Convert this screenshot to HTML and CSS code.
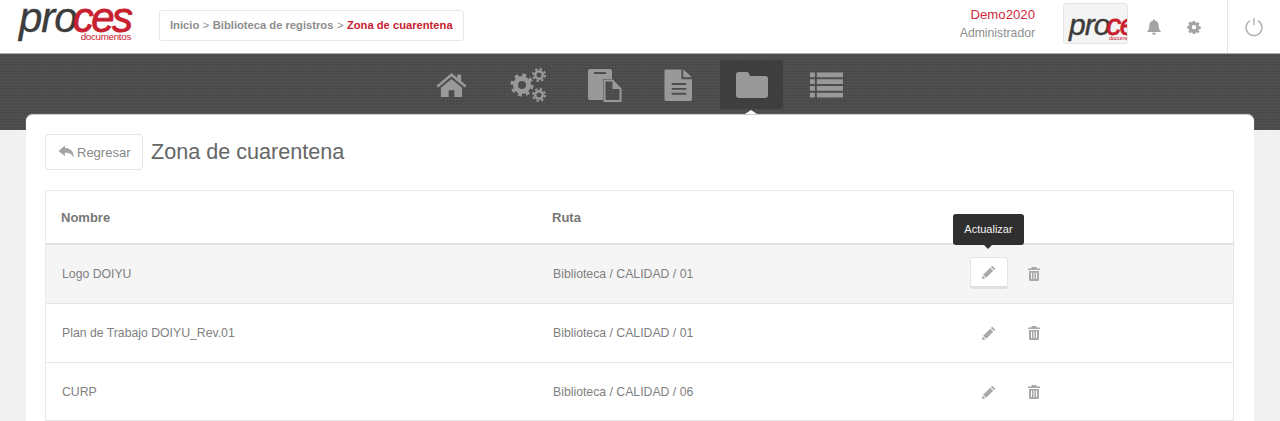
FILE: index.html
```html
<!DOCTYPE html>
<html lang="es">
<head>
    <meta charset="UTF-8">
    <meta name="viewport" content="width=device-width, initial-scale=1.0">
    <title>Zona de cuarentena</title>
    <link rel="stylesheet" href="styles.css">
</head>
<body>
    <header class="topbar">
        <a class="logo" href="#">
            <span class="logo-word"><span class="logo-dark">pro</span><span class="logo-red">ces</span></span>
            <span class="logo-sub">documentos</span>
        </a>
        <nav class="crumbs">
            <a href="#">Inicio</a>
            <span class="crumb-sep">&gt;</span>
            <a href="#">Biblioteca de registros</a>
            <span class="crumb-sep">&gt;</span>
            <span class="crumb-current">Zona de cuarentena</span>
        </nav>
        <div class="user">
            <div class="user-name">Demo2020</div>
            <div class="user-role">Administrador</div>
        </div>
        <div class="user-pic">
            <span class="logo-word"><span class="logo-dark">pro</span><span class="logo-red">ces</span></span>
            <span class="logo-sub">documentos</span>
        </div>
        <svg class="top-icon bell" viewBox="0 0 16 16"><path d="M8 0.500a1.200 1.200 0 0 0-1.200 1.300C4.600 2.300 3.400 4 3.400 6.200c0 3.200-.9 4.600-2.100 5.900v1h13.400v-1c-1.200-1.300-2.100-2.700-2.100-5.900 0-2.200-1.200-3.900-3.400-4.400A1.200 1.200 0 0 0 8 .5zM6.100 13.800a1.900 1.900 0 0 0 3.800 0z"/></svg>
        <svg class="top-icon gear" viewBox="0 0 16 16"><path fill-rule="evenodd" d="M6.700 1h2.600l.4 1.900 1.200.5 1.600-1.100 1.900 1.900-1.100 1.600.5 1.200 1.900.4v2.600l-1.900.4-.5 1.200 1.100 1.600-1.900 1.900-1.600-1.100-1.200.5-.4 1.900H6.700l-.4-1.900-1.200-.5-1.600 1.100-1.900-1.900 1.100-1.600-.5-1.200L.3 9.500V6.900l1.900-.4.500-1.200-1.100-1.600 1.900-1.900 1.600 1.100 1.200-.5zM8 5.700a2.500 2.500 0 1 0 0 5 2.500 2.500 0 0 0 0-5z"/></svg>
        <a class="power" href="#">
            <svg viewBox="0 0 20 20"><path d="M6 3.600a8 8 0 1 0 8 0M10 1v7" fill="none" stroke="#b5b5b5" stroke-width="1.500"/></svg>
        </a>
    </header>

    <nav class="mainnav">
        <a class="nav-item" href="#">
            <svg viewBox="0 0 32 26" width="31" height="25"><path d="M16 1 0.500 14l1.600 2L16 4.600l13.900 11.400 1.600-2L26 9.400V2.500h-4v3.500zM5 16.500V26h8v-7h6v7h8v-9.500L16 7.400z"/></svg>
        </a>
        <a class="nav-item nudge-1" href="#">
            <svg viewBox="0 0 36 34" width="36" height="34"><circle cx="12" cy="17" r="6.500" fill="none" stroke="#999" stroke-width="5"/><circle cx="12" cy="17" r="10" fill="none" stroke="#999" stroke-width="3" stroke-dasharray="3.900 3.950"/><circle cx="29" cy="7" r="3.750" fill="none" stroke="#999" stroke-width="2.500"/><circle cx="29" cy="7" r="6" fill="none" stroke="#999" stroke-width="2" stroke-dasharray="2.350 2.360"/><circle cx="29" cy="27" r="3.750" fill="none" stroke="#999" stroke-width="2.500"/><circle cx="29" cy="27" r="6" fill="none" stroke="#999" stroke-width="2" stroke-dasharray="2.350 2.360"/></svg>
        </a>
        <a class="nav-item nudge-3" href="#">
            <svg viewBox="0 0 34 34" width="34" height="34"><path d="M2 1h20a2 2 0 0 1 2 2v8h-9v21H2a2 2 0 0 1-2-2V3a2 2 0 0 1 2-2zm4 3v2h12V4z" fill-rule="evenodd"/><path d="M16.500 12.500h8l8 8.500v12h-16z" fill="none" stroke="#999" stroke-width="2"/><path d="M24.500 13v8h8z"/></svg>
        </a>
        <a class="nav-item nudge-2" href="#">
            <svg viewBox="0 0 30 34" width="29" height="34"><path fill-rule="evenodd" d="M2 1h16v10h11v21a1.500 1.500 0 0 1-1.500 1.500H2A1.500 1.500 0 0 1 .5 32V2.500A1.500 1.500 0 0 1 2 1zm6 14v2h15v-2zm0 5v2h15v-2zm0 5v2h15v-2z"/><path d="M20 1l9 8h-9z"/></svg>
        </a>
        <a class="nav-item active" href="#">
            <svg viewBox="0 0 32 28" width="32" height="28"><path d="M3 1h8a2 2 0 0 1 2 1.500L14 5h15a3 3 0 0 1 3 3v16a3 3 0 0 1-3 3H3a3 3 0 0 1-3-3V4a3 3 0 0 1 3-3z"/></svg>
        </a>
        <a class="nav-item" href="#">
            <svg viewBox="0 0 34 28" width="33" height="28"><path d="M0 1h5v5H0zM7 1h27v5H7zM0 8h5v5H0zM7 8h27v5H7zM0 15h5v5H0zM7 15h27v5H7zM0 22h5v5H0zM7 22h27v5H7z"/></svg>
        </a>
    </nav>

    <main class="card">
        <div class="card-head">
            <a class="back-btn" href="#">
                <svg viewBox="0 0 16 14" width="17" height="15"><path d="M6.500 0.500 0.500 5.500l6 5V7.300c4 0 6.500.8 8 4.700.8-4.500-1.500-9-8-9.300z"/></svg>
                Regresar
            </a>
            <h1>Zona de cuarentena</h1>
        </div>

        <div class="table-box">
            <div class="row row-head">
                <div class="col-name">Nombre</div>
                <div class="col-path">Ruta</div>
            </div>
            <div class="row row-hover">
                <div class="col-name">Logo DOIYU</div>
                <div class="col-path">Biblioteca / CALIDAD / 01</div>
                <div class="col-actions">
                    <a class="act act-on" href="#">
                        <span class="tip">Actualizar</span>
                        <svg viewBox="0 0 14 14" width="14" height="14"><path d="M10.300 0.700 13.300 3.700 11.900 5.100 8.900 2.100zM8.200 2.800 11.200 5.800 4.200 12.800 1.200 9.800zM.6 10.500 3.500 13.400 0 14z"/></svg>
                    </a>
                    <a class="act" href="#">
                        <svg viewBox="0 0 12 14" width="12" height="14"><path fill-rule="evenodd" d="M4 0h4l1 1.600h3v1.500H0V1.600h3zM1 4h10v8.500a1.500 1.500 0 0 1-1.500 1.500h-7A1.500 1.500 0 0 1 1 12.500zm2 1.500V12h1V5.500zm2.500 0V12h1V5.500zm2.500 0V12h1V5.500z"/></svg>
                    </a>
                </div>
            </div>
            <div class="row">
                <div class="col-name">Plan de Trabajo DOIYU_Rev.01</div>
                <div class="col-path">Biblioteca / CALIDAD / 01</div>
                <div class="col-actions">
                    <a class="act" href="#">
                        <svg viewBox="0 0 14 14" width="14" height="14"><path d="M10.300 0.700 13.300 3.700 11.900 5.100 8.900 2.100zM8.200 2.800 11.200 5.800 4.200 12.800 1.200 9.800zM.6 10.500 3.500 13.400 0 14z"/></svg>
                    </a>
                    <a class="act" href="#">
                        <svg viewBox="0 0 12 14" width="12" height="14"><path fill-rule="evenodd" d="M4 0h4l1 1.600h3v1.500H0V1.600h3zM1 4h10v8.500a1.500 1.500 0 0 1-1.500 1.500h-7A1.500 1.500 0 0 1 1 12.500zm2 1.500V12h1V5.500zm2.500 0V12h1V5.500zm2.500 0V12h1V5.500z"/></svg>
                    </a>
                </div>
            </div>
            <div class="row">
                <div class="col-name">CURP</div>
                <div class="col-path">Biblioteca / CALIDAD / 06</div>
                <div class="col-actions">
                    <a class="act" href="#">
                        <svg viewBox="0 0 14 14" width="14" height="14"><path d="M10.300 0.700 13.300 3.700 11.900 5.100 8.900 2.100zM8.200 2.800 11.200 5.800 4.200 12.800 1.200 9.800zM.6 10.500 3.500 13.400 0 14z"/></svg>
                    </a>
                    <a class="act" href="#">
                        <svg viewBox="0 0 12 14" width="12" height="14"><path fill-rule="evenodd" d="M4 0h4l1 1.600h3v1.500H0V1.600h3zM1 4h10v8.500a1.500 1.500 0 0 1-1.500 1.500h-7A1.500 1.500 0 0 1 1 12.500zm2 1.500V12h1V5.500zm2.500 0V12h1V5.500zm2.500 0V12h1V5.500z"/></svg>
                    </a>
                </div>
            </div>
        </div>
    </main>
</body>
</html>
```

FILE: styles.css
```css
* {
    box-sizing: border-box;
}

body {
    margin: 0;
    height: 421px;
    overflow: hidden;
    background: #f1f1f1;
    font-family: "Liberation Sans", Arial, sans-serif;
    color: #777;
}

a {
    color: inherit;
    text-decoration: none;
}

/* top bar */
.topbar {
    display: flex;
    align-items: center;
    height: 53px;
    background: #fff;
    padding-left: 19px;
}

.logo {
    display: block;
    width: 114px;
    height: 40px;
    flex: none;
    align-self: flex-start;
    margin-top: 2px;
}

.logo-word {
    display: block;
    font-size: 42px;
    font-style: italic;
    letter-spacing: -1px;
    line-height: 31px;
    white-space: nowrap;
}

.logo-dark {
    color: #3c3c3c;
    -webkit-text-stroke: 0.4px #3c3c3c;
}

.logo-red {
    margin-left: -4px;
    color: #c8202f;
    letter-spacing: -2.500px;
    -webkit-text-stroke: 0.8px #c8202f;
}

.logo-sub {
    display: block;
    padding-right: 2px;
    text-align: right;
    font-size: 9.800px;
    line-height: 8px;
    letter-spacing: -0.3px;
    color: #c8202f;
}

.crumbs {
    display: flex;
    align-items: center;
    gap: 3.500px;
    height: 31px;
    margin: -3px 0 0 26px;
    padding: 0 10px;
    border: 1px solid #e8e8e8;
    border-radius: 3px;
    font-size: 11.200px;
    font-weight: bold;
    color: #8d8d8d;
}

.crumb-sep {
    font-weight: normal;
}

.crumb-current {
    color: #c8202f;
}

.user {
    margin: -6px 0 0 auto;
    text-align: right;
    line-height: 19px;
}

.user-name {
    font-size: 13.200px;
    color: #d3273a;
}

.user-role {
    font-size: 12.200px;
    color: #8e8e8e;
}

.user-pic {
    width: 65px;
    height: 41px;
    align-self: flex-start;
    margin: 3px 0 0 28px;
    padding: 9px 0 0 5px;
    overflow: hidden;
    border: 1px solid #e4e4e4;
    border-radius: 3px;
    background: #f4f4f4;
}

.user-pic .logo-word {
    font-size: 30px;
    line-height: 23px;
}

.user-pic .logo-red {
    margin-left: -3px;
    letter-spacing: -1.500px;
}

.user-pic .logo-sub {
    font-size: 6px;
    line-height: 5px;
    padding-left: 40px;
    text-align: left;
    white-space: nowrap;
}

.top-icon {
    width: 16px;
    height: 16px;
    flex: none;
    fill: #a3a3a3;
}

.bell {
    margin-left: 18px;
}

.gear {
    margin-left: 25px;
    width: 14px;
    height: 14px;
}

.power {
    display: flex;
    align-items: center;
    justify-content: center;
    width: 53px;
    height: 53px;
    margin-left: 26px;
    border-left: 1px solid #e6e6e6;
}

.power svg {
    width: 20px;
    height: 20px;
}

/* icon strip */
.mainnav {
    display: flex;
    justify-content: center;
    gap: 12px;
    height: 77px;
    padding: 6px 2px 0 0;
    border-top: 1px solid #aaa;
    background-color: #4c4c4c;
    background-image:
        linear-gradient(rgba(255, 255, 255, 0.035) 1px, transparent 1px),
        linear-gradient(90deg, rgba(0, 0, 0, 0.05) 1px, transparent 1px);
    background-size: 3px 3px;
}

.nav-item {
    display: flex;
    align-items: center;
    justify-content: center;
    position: relative;
    width: 63px;
    height: 49px;
    border-radius: 3px;
}

.nav-item svg {
    fill: #999;
}

.nudge-1 svg {
    margin-left: 2px;
}

.nudge-2 svg {
    margin-left: 4px;
}

.nudge-3 svg {
    margin-left: 6px;
}

.nav-item.active {
    background: #3e3e3e;
}

.nav-item.active::after {
    content: "";
    position: absolute;
    left: 25px;
    top: 50px;
    border: 6px solid transparent;
    border-top: 0;
    border-bottom: 4px solid #fff;
}

/* content card */
.card {
    position: relative;
    width: 1228px;
    height: 307px;
    margin: -16px 0 0 26px;
    padding: 19px 20px 0 19px;
    background: #fff;
    border-radius: 7px 7px 0 0;
    border-top: 1px solid #ccc;
    box-shadow: 0 0 1px #ddd;
}

.card-head {
    display: flex;
    align-items: center;
    height: 36px;
}

.back-btn {
    display: flex;
    align-items: center;
    gap: 2px;
    width: 98px;
    height: 36px;
    padding-left: 12px;
    border: 1px solid #e6e6e6;
    border-radius: 3px;
    font-size: 13px;
    color: #888;
}

.back-btn svg {
    fill: #a5a5a5;
}

h1 {
    margin: 0 0 0 8px;
    font-size: 21.600px;
    font-weight: normal;
    color: #666;
}

.table-box {
    height: 231px;
    margin-top: 20px;
    border: 1px solid #e8e8e8;
    border-bottom: 0;
}

.row {
    display: flex;
    align-items: center;
    height: 59px;
    border-bottom: 1px solid #e6e6e6;
    font-size: 12.250px;
    color: #808080;
}

.row:last-child {
    height: 58px;
}

.row-head {
    height: 54px;
    border-bottom: 2px solid #e3e3e3;
    font-weight: bold;
    font-size: 13px;
    color: #777;
}

.row-head .col-name {
    padding-left: 15px;
}

.row-head .col-path {
    margin-left: -1px;
}

.row-hover {
    background: #f5f5f5;
}

.col-name {
    width: 507px;
    padding-left: 16px;
}

.col-path {
    width: 417px;
}

.col-actions {
    display: flex;
    align-items: center;
    gap: 7px;
}

.act {
    display: flex;
    align-items: center;
    justify-content: center;
    position: relative;
    width: 38px;
    height: 32px;
}

.act svg {
    fill: #a8a8a8;
}

.act-on {
    margin-top: -2px;
    background: #fff;
    border: 1px solid #e4e4e4;
    border-bottom: 3px solid #e0e0e0;
    border-radius: 3px;
}

.tip {
    position: absolute;
    left: -18px;
    bottom: 41px;
    width: 71px;
    height: 31px;
    line-height: 31px;
    text-align: center;
    background: #2f2f2f;
    color: #f2f2f2;
    font-size: 11px;
    border-radius: 3px;
}

.tip::after {
    content: "";
    position: absolute;
    left: 31px;
    top: 31px;
    border: 4px solid transparent;
    border-bottom: 0;
    border-top-color: #2f2f2f;
}
```
